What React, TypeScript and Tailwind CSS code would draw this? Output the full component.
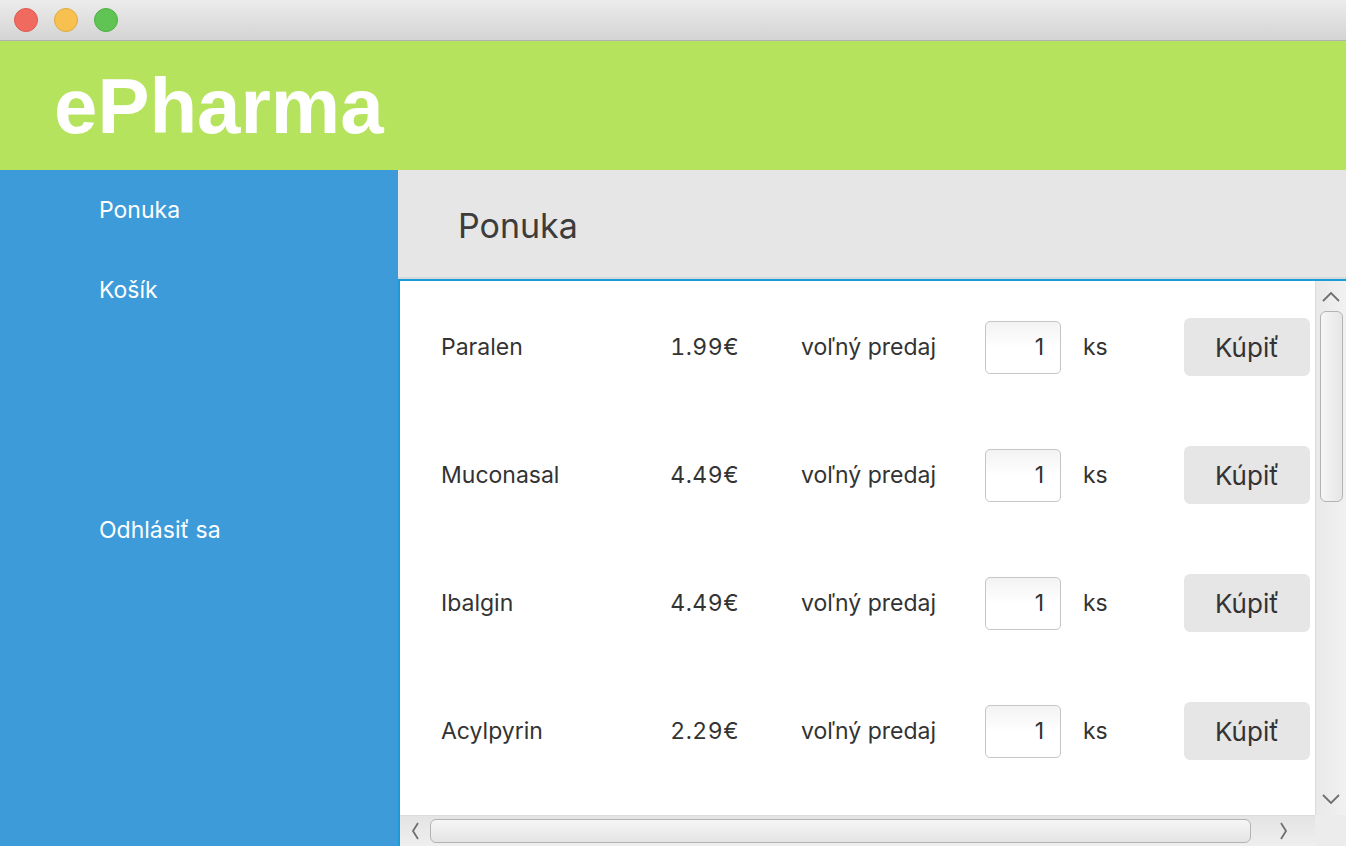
import React from 'react';

const products = [
  { name: 'Paralen', price: '1.99€' },
  { name: 'Muconasal', price: '4.49€' },
  { name: 'Ibalgin', price: '4.49€' },
  { name: 'Acylpyrin', price: '2.29€' },
];

function Chevron({ dir }: { dir: 'up' | 'down' | 'left' | 'right' }) {
  const paths: Record<string, string> = {
    up: 'M1 10 L9 2 L17 10',
    down: 'M1 2 L9 10 L17 2',
    left: 'M7 1 L2 9 L7 17',
    right: 'M2 1 L7 9 L2 17',
  };
  const vertical = dir === 'up' || dir === 'down';
  return (
    <svg width={vertical ? 18 : 9} height={vertical ? 12 : 18} viewBox={vertical ? '0 0 18 12' : '0 0 9 18'}>
      <path d={paths[dir]} fill="none" stroke="#6f6f6f" strokeWidth="1.8" />
    </svg>
  );
}

export default function App() {
  return (
    <div className="w-[1346px] h-[846px] flex flex-col overflow-hidden bg-white font-['Inter','Liberation_Sans',sans-serif]">
      {/* title bar */}
      <div className="h-[41px] shrink-0 flex items-center gap-[16px] pl-[14px] bg-gradient-to-b from-[#ececec] to-[#d4d4d4] border-b border-[#b2b2b2]">
        <div className="w-[24px] h-[24px] rounded-full bg-[#f06a5f] border border-[#dc5a50]" />
        <div className="w-[24px] h-[24px] rounded-full bg-[#f8c04f] border border-[#deaa40]" />
        <div className="w-[24px] h-[24px] rounded-full bg-[#5fc454] border border-[#4faf45]" />
      </div>

      {/* header */}
      <div className="h-[129px] shrink-0 flex items-center pl-[54px] bg-[#b5e35d]">
        <span className="text-[78px] leading-none font-bold text-white font-['Liberation_Sans',Arial,sans-serif]">ePharma</span>
      </div>

      <div className="flex flex-1 min-h-0">
        {/* sidebar */}
        <div className="w-[398px] shrink-0 bg-[#3d9bd9] text-white text-[23px] pl-[99px]">
          <div className="h-[80px] flex items-center">Ponuka</div>
          <div className="h-[80px] flex items-center">Košík</div>
          <div className="h-[80px] flex items-center mt-[160px]">Odhlásiť sa</div>
        </div>

        {/* main */}
        <div className="flex-1 flex flex-col min-w-0">
          <div className="h-[107px] shrink-0 bg-[#e6e6e6] flex items-center pl-[60px] pt-[4px] text-[34px] text-[#3c3c3c]">
            Ponuka
          </div>
          <div className="h-[2px] shrink-0 bg-[#d3dadd]" />
          <div className="flex-1 min-h-0 border-t-2 border-l-2 border-[#1a9bd8] flex flex-col">
            <div className="flex flex-1 min-h-0">
              <div className="flex-1 min-w-0 overflow-hidden pt-[2px]">
                {products.map((p) => (
                  <div key={p.name} className="h-[128px] flex items-center pl-[41px] text-[23px] text-[#333] whitespace-nowrap">
                    <div className="w-[200px] shrink-0">{p.name}</div>
                    <div className="w-[98px] shrink-0 text-right tabular-nums tracking-[0.5px]">{p.price}</div>
                    <div className="w-[184px] shrink-0 ml-[62px]">voľný predaj</div>
                    <div className="w-[76px] h-[53px] shrink-0 rounded-[5px] border border-[#c6c6c6] bg-gradient-to-b from-[#f3f3f3] via-white to-white flex items-center justify-end pr-[16px]">
                      1
                    </div>
                    <div className="w-[101px] shrink-0 ml-[22px]">ks</div>
                    <div className="w-[126px] h-[58px] shrink-0 rounded-[6px] bg-[#e6e6e6] flex items-center justify-center text-[26px]">
                      Kúpiť
                    </div>
                  </div>
                ))}
              </div>
              {/* vertical scrollbar */}
              <div className="w-[31px] shrink-0 bg-gradient-to-r from-[#e9e9e9] to-[#f1f1f1] border-l border-[#dcdcdc] flex flex-col items-center">
                <div className="h-[30px] flex items-center justify-center pt-[2px]">
                  <Chevron dir="up" />
                </div>
                <div className="w-[23px] h-[191px] rounded-[6px] border border-[#b3b3b3] bg-gradient-to-r from-[#f6f6f6] to-[#e6e6e6]" />
                <div className="flex-1" />
                <div className="h-[30px] flex items-center justify-center pb-[2px]">
                  <Chevron dir="down" />
                </div>
              </div>
            </div>
            {/* horizontal scrollbar */}
            <div className="h-[31px] shrink-0 flex">
              <div className="flex-1 flex items-center bg-gradient-to-b from-[#e4e4e4] to-[#efefef] border-t border-[#dcdcdc]">
                <div className="w-[30px] flex justify-center">
                  <Chevron dir="left" />
                </div>
                <div className="w-[821px] h-[24px] rounded-[6px] border border-[#b3b3b3] bg-gradient-to-b from-[#f6f6f6] to-[#e4e4e4]" />
                <div className="flex-1 flex justify-center">
                  <Chevron dir="right" />
                </div>
              </div>
              <div className="w-[31px] shrink-0 bg-[#ececec]" />
            </div>
          </div>
        </div>
      </div>
    </div>
  );
}
